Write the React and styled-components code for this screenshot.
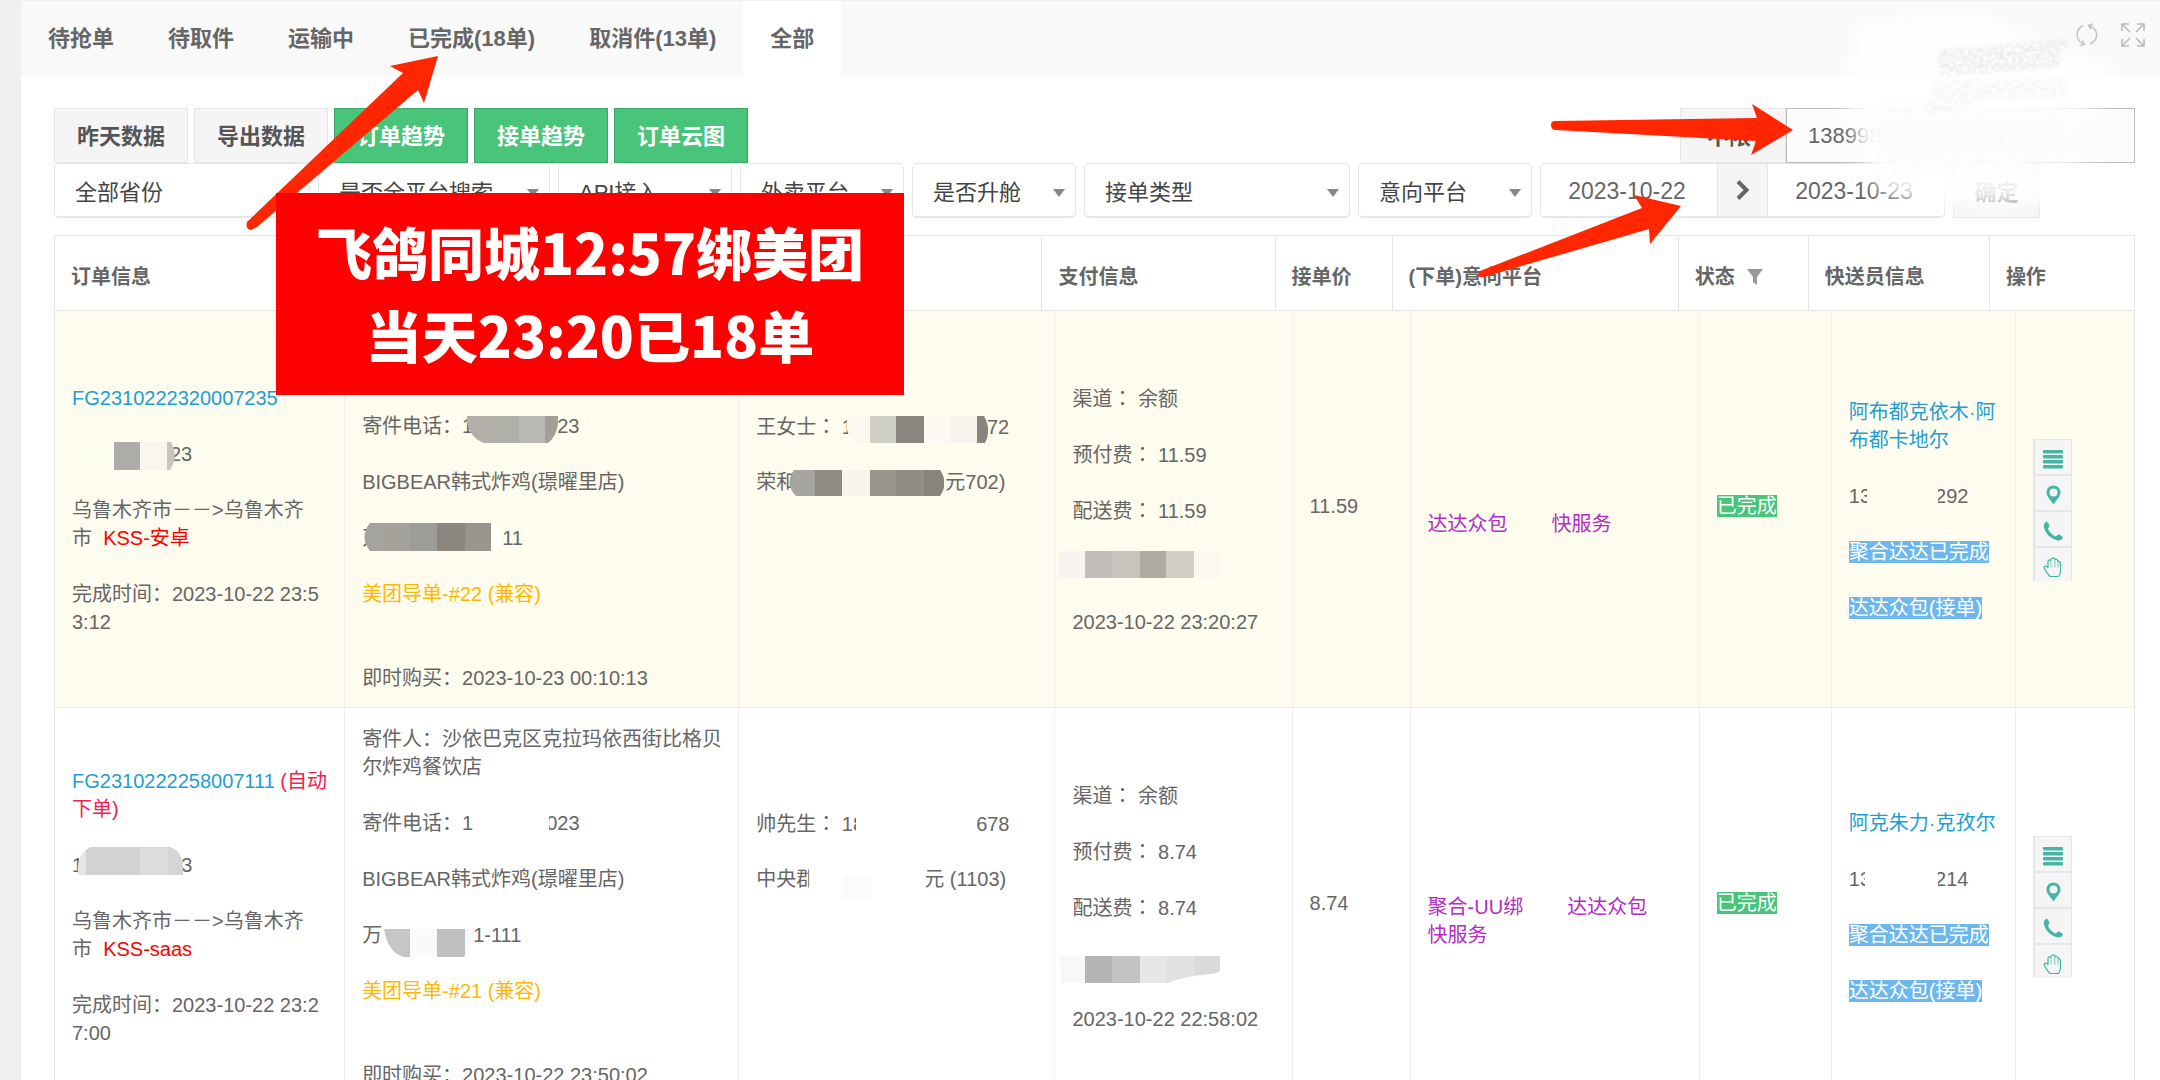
import React from "react";
import styled, { createGlobalStyle } from "styled-components";

const GlobalStyle = createGlobalStyle`
  * {
    box-sizing: border-box;
  }

  body {
    margin: 0;
    background: #f0f0f0;
    color: #666;
    font: 20px/28px "Liberation Sans", "Noto Sans CJK SC", sans-serif;
  }

  button,
  input,
  select {
    font-family: inherit;
    font-size: 22px;
    margin: 0;
  }
`;

const Page = styled.div`
  position: relative;
  height: 100vh;
  overflow: hidden;
  padding: 1px 0 0 21px;
`;

const Card = styled.main`
  min-height: 100%;
  background: #fff;
`;

const TabBar = styled.nav`
  display: flex;
  height: 75px;
  background: #f9f9f9;
`;

const Tab = styled.button`
  padding: 0 27px 5px;
  border: 0;
  background: ${(p) => (p.$active ? "#fff" : "transparent")};
  color: #666;
  font-weight: 700;
`;

const Tools = styled.div`
  display: flex;
  align-items: flex-start;
  gap: 23px;
  margin-left: auto;
  padding: 22px 15px 0 0;
`;

const ToolButton = styled.button`
  display: flex;
  padding: 0;
  border: 0;
  background: none;
`;

const Body = styled.div`
  padding: 32px 25px 0 33px;
`;

const Toolbar = styled.div`
  display: flex;
  gap: 6px;
`;

const Button = styled.button`
  height: 55px;
  padding: 0 22px 4px;
  border: 1px solid ${(p) => (p.$green ? "#3ba869" : "#e6e6e6")};
  background: ${(p) => (p.$green ? "#48c47b" : "#f5f5f5")};
  color: ${(p) => (p.$green ? "#fff" : "#555")};
  font-weight: 700;
`;

const Search = styled.div`
  display: flex;
  margin-left: auto;
`;

const SearchType = styled(Button)`
  width: 106px;
  padding: 0 30px 4px 22px;
`;

const SearchInput = styled.input`
  width: 349px;
  height: 55px;
  padding: 0 21px;
  border: 1px solid #bbb;
  background: #fcfcfc;
  color: #666;
`;

const Filters = styled.div`
  display: flex;
  gap: 8px;
`;

const SelectBox = styled.div`
  position: relative;
  width: ${(p) => p.$w}px;

  &::after {
    content: "";
    position: absolute;
    right: 11px;
    top: 26px;
    border: 6px solid transparent;
    border-top: 8px solid #888;
    border-bottom: 0;
    pointer-events: none;
  }
`;

const Select = styled.select`
  appearance: none;
  width: 100%;
  height: 55px;
  padding: 4px 20px 0 20px;
  border: 1px solid #e6e6e6;
  border-bottom-width: 2px;
  border-radius: 5px;
  background: #fff;
  color: #444;
`;

const DateRange = styled.div`
  display: flex;
  height: 55px;
  border: 1px solid #e6e6e6;
  border-bottom-width: 2px;
  border-radius: 5px;
  overflow: hidden;
`;

const DateInput = styled.input`
  width: 176px;
  padding: 2px 4px 0 0;
  border: 0;
  background: #fff;
  color: #666;
  font-size: 23px;
  text-align: center;
`;

const DateArrow = styled.span`
  display: flex;
  align-items: center;
  justify-content: center;
  width: 51px;
  border: solid #e6e6e6;
  border-width: 0 1px;
  background: #f5f5f5;
`;

const Confirm = styled(Button)`
  width: 87px;
  padding: 0 20px 2px;
  color: #666;
`;

const TableBox = styled.div`
  margin-top: 17px;
  border: 1px solid #e6e6e6;
  border-bottom: 0;
`;

const Table = styled.table`
  width: 100%;
  table-layout: fixed;
  border-collapse: separate;
  border-spacing: 0;
`;

const Col = styled.col`
  width: ${(p) => p.$w}px;
`;

const Th = styled.th`
  height: 75px;
  padding: 8px 0 0 16px;
  border: solid #e6e6e6;
  border-width: 0 1px 1px 0;
  text-align: left;
  white-space: nowrap;

  &:last-child {
    border-right: 0;
  }

  svg {
    margin-left: 12px;
    vertical-align: -1px;
  }
`;

const Row = styled.tr`
  background: ${(p) => (p.$hot ? "#fefcee" : "#fff")};
`;

const Td = styled.td`
  padding: 17px 0 15px 17px;
  border: solid #eee;
  border-width: 0 1px 1px 0;
  vertical-align: middle;
  white-space: nowrap;

  &:last-child {
    border-right: 0;
  }
`;

const Line = styled.div`
  height: 28px;
`;

const Raised = styled.div`
  padding-bottom: 8px;
`;

const Text = styled.span`
  color: ${(p) => p.$c};
`;

const Link = styled.a`
  color: #1e9fd0;
  text-decoration: none;
`;

const Tag = styled.span`
  background: ${(p) => p.$bg};
  color: #fff;
`;

const Gap = styled.span`
  display: inline-block;
  width: ${(p) => p.$w}px;
`;

// centred form of the full-width colon
const Wide = styled.span`
  font-family: "Noto Sans CJK TC", sans-serif;
`;

const Actions = styled.div`
  display: flex;
  flex-direction: column;
  width: 39px;
  height: 142px;
  overflow: hidden;
`;

const Action = styled.button`
  display: flex;
  flex: none;
  align-items: center;
  justify-content: center;
  height: 36px;
  padding: 3px 0 0;
  border: solid #e6e6e6;
  border-width: 1px 1px 1px 2px;
  background: #f5f5f5;
`;

const Marks = styled.svg`
  position: absolute;
  top: 0;
  left: 0;
  pointer-events: none;
`;

const Banner = styled.div`
  position: absolute;
  top: 193px;
  left: 276px;
  width: 628px;
  padding: 16px 0 20px;
  background: #f00;
  color: #fff;
  font: 900 56px/83px "Noto Sans CJK SC", sans-serif;
  text-align: center;
`;

const TABS = ["待抢单", "待取件", "运输中", "已完成(18单)", "取消件(13单)", "全部"];

const SELECTS = [
  ["全部省份", 256],
  ["是否全平台搜索", 232],
  ["API接入", 174],
  ["外卖平台", 164],
  ["是否升舱", 164],
  ["接单类型", 266],
  ["意向平台", 174],
];

const HEADS = [
  ["订单信息", 290],
  ["", 390],
  ["", 307],
  ["支付信息", 233],
  ["接单价", 117],
  ["(下单)意向平台", 286],
  ["状态", 130],
  ["快送员信息", 181],
  ["操作", 144],
];

const COLS = [290, 394, 316, 237, 118, 289, 132, 184, 118];

const BLUE = "#6db7ec";

const ORDERS = [
  {
    hot: true,
    order: [
      <Link href="#order">FG2310222320007235</Link>,
      null,
      <><Gap $w={98} />23</>,
      null,
      "乌鲁木齐市－－>乌鲁木齐",
      <>市&nbsp; <Text $c="#f00">KSS-安卓</Text></>,
      null,
      "完成时间：2023-10-22 23:5",
      "3:12",
    ],
    sender: [
      null, null, null,
      <>寄件电话：1<Gap $w={84} />23</>,
      null,
      "BIGBEAR韩式炸鸡(璟曜里店)",
      null,
      <>万<Gap $w={120} />11</>,
      null,
      <Text $c="#ffb800">美团导单-#22 (兼容)</Text>,
      null, null,
      "即时购买：2023-10-23 00:10:13",
    ],
    receiver: [
      <>王女士<Wide>：</Wide> 1<Gap $w={134} />72</>,
      null,
      <>荣和<Gap $w={149} />元702)</>,
      null, null, null, null,
    ],
    fee: "11.59",
    paid: "2023-10-22 23:20:27",
    platform: [null, <Text $c="#b32dc4">达达众包<Gap $w={44} />快服务</Text>],
    courier: [
      <Link href="#courier">阿布都克依木·阿</Link>,
      <Link href="#courier">布都卡地尔</Link>,
      null,
      <>13<Gap $w={64} />292</>,
    ],
  },
  {
    order: [
      <><Link href="#order">FG2310222258007111</Link> <Text $c="#f5224f">(自动</Text></>,
      <Text $c="#f5224f">下单)</Text>,
      null,
      <>1<Gap $w={98} />3</>,
      null,
      "乌鲁木齐市－－>乌鲁木齐",
      <>市&nbsp; <Text $c="#f00">KSS-saas</Text></>,
      null,
      "完成时间：2023-10-22 23:2",
      "7:00",
    ],
    sender: [
      "寄件人：沙依巴克区克拉玛依西街比格贝",
      "尔炸鸡餐饮店",
      null,
      <>寄件电话：1<Gap $w={73} />023</>,
      null,
      "BIGBEAR韩式炸鸡(璟曜里店)",
      null,
      <>万<Gap $w={91} />1-111</>,
      null,
      <Text $c="#ffb800">美团导单-#21 (兼容)</Text>,
      null, null,
      "即时购买：2023-10-22 23:50:02",
    ],
    receiver: [
      <>帅先生<Wide>：</Wide> 18<Gap $w={112} />678</>,
      null,
      <>中央郡<Gap $w={108} />元 (1103)</>,
      null, null, null, null,
    ],
    fee: "8.74",
    paid: "2023-10-22 22:58:02",
    platform: [
      null,
      <Text $c="#b32dc4">聚合-UU绑<Gap $w={44} />达达众包</Text>,
      <Text $c="#b32dc4">快服务</Text>,
    ],
    courier: [
      <Link href="#courier">阿克朱力·克孜尔</Link>,
      null,
      <>13<Gap $w={64} />214</>,
    ],
  },
];

// pixelated strips: y, height, [x edges], [fills], clip outline
const MOSAICS = [
  { y: 442, h: 28, x: [76, 114, 140, 167, 175], c: ["#fdfdf0", "#adaca8", "#f9f6ef", "#c9c5bb"], d: "M76 442H171Q179 456 170 470H76Z" },
  { y: 416, h: 27, x: [467, 490, 519, 545, 558], c: ["#b3b0a9", "#b0b0a8", "#b8b8b4", "#a29e98"], d: "M467 416H558V424Q556 437 548 443H484Q470 438 467 422Z" },
  { y: 523, h: 28, x: [364, 384, 410, 437, 465, 491, 502], c: ["#a5a39e", "#a5a29c", "#9c9c98", "#8b877f", "#98958d", "#fefefb"], d: "M370 523H496Q502 526 502 537Q502 548 494 551H370Q359 537 370 523Z" },
  { y: 416, h: 27, x: [847, 870, 896, 924, 950, 977, 988], c: ["#fbf8f2", "#d0d0c5", "#8b8780", "#fdfaf3", "#f7f4ee", "#8a847d"], d: "M847 416H984Q992 430 985 443H856Q849 438 847 430Z" },
  { y: 470, h: 26, x: [789, 815, 842, 870, 896, 924, 944], c: ["#a6a49e", "#8f8b84", "#f7f4ea", "#98958d", "#918d86", "#87847a"], d: "M794 470H940Q949 483 940 496H796Q784 484 794 470Z" },
  { y: 551, h: 27, x: [1059, 1085, 1112, 1140, 1166, 1194, 1220], c: ["#f8f5f0", "#c1bdb8", "#c8c3bd", "#aeaba2", "#d1cec5", "#fbf8f2"], d: "M1059 551H1220V578H1059Z" },
  { y: 847, h: 28, x: [77, 86, 140, 168, 183], c: ["#e6e6e6", "#d3d3d3", "#dcdcdc", "#d5d5d5"], d: "M78 875Q76 855 90 847H170Q182 851 183 866V875Z" },
  { y: 929, h: 28, x: [384, 410, 437, 465, 475], c: ["#c6c6c6", "#fafafa", "#c0c0c0", "#f8f8f8"], d: "M384 929H475Q472 945 464 957H404Q388 953 384 929Z" },
  { y: 956, h: 27, x: [1059, 1085, 1112, 1140, 1166, 1194, 1220], c: ["#f8f8f8", "#b5b5b5", "#c3c3c3", "#e7e7e7", "#e2e2e2", "#dadada"], d: "M1059 956H1220V970Q1218 974 1210 974Q1186 976 1168 983H1062Z" },
];

function Lines({ items }) {
  return items.map((item, i) => <Line key={i}>{item}</Line>);
}

function RefreshIcon() {
  return (
    <svg width="22" height="24" viewBox="0 0 22 24" fill="none" stroke="#c4c4c4" strokeWidth="1.5">
      <path d="M7 2.5C-1 7-1 17 8 21.5M4 22.5L8.500 21.500 6.500 17.500M14 21C23 17 23 6 13 2.500M17 1L12.500 2.500 15 6.500" />
    </svg>
  );
}

function FullscreenIcon() {
  return (
    <svg width="24" height="24" viewBox="0 0 24 24" fill="none" stroke="#bbb" strokeWidth="1.6">
      <path d="M1 8V1H8M1 1L9 9M16 1H23V8M23 1L15 9M1 16V23H8M1 23L9 15M16 23H23V16M23 23L15 15" />
    </svg>
  );
}

function ListIcon() {
  return (
    <svg width="20" height="20" viewBox="0 0 20 20" fill="#45b5a6">
      <rect y="1" width="20" height="3.500" rx="1" />
      <rect y="6" width="20" height="3.500" rx="1" />
      <rect y="11" width="20" height="3.500" rx="1" />
      <rect y="16" width="20" height="3.500" rx="1" />
    </svg>
  );
}

function PinIcon() {
  return (
    <svg width="20" height="20" viewBox="0 0 20 20" fill="#45b5a6">
      <path fillRule="evenodd" d="M10.500 0.500C14.500 0.500 17.500 3.500 17.500 7.500C17.500 11.500 13.500 15 10.500 19.500C7.500 15 3.500 11.500 3.500 7.500C3.500 3.500 6.500 0.500 10.500 0.500ZM10.500 3.500A4 4 0 1 0 10.500 11.500A4 4 0 1 0 10.500 3.500Z" />
    </svg>
  );
}

function PhoneIcon() {
  return (
    <svg width="20" height="20" viewBox="0 0 20 20" fill="#45b5a6">
      <path d="M3.500 0.500C5 1.500 6 3 6.500 5C6 6.500 5 7 5 8C6.500 11.500 9.500 14 12.500 15.500C13.500 15.500 14 14 15.500 13.500C17.500 14 19 15 20 16.500C19 18.500 17 20 14.500 19.500C7.500 17.500 2 12.500 0.800 5.500C0.500 3.500 1.500 1.500 3.500 0.500Z" />
    </svg>
  );
}

function HandIcon() {
  return (
    <svg width="20" height="20" viewBox="0 0 20 20" fill="none" stroke="#45b5a6" strokeWidth="1.2" strokeLinejoin="round" strokeLinecap="round">
      <path d="M7 19.500C4.500 17 2.500 14 1 10.500C1.500 8.500 3.500 9 5 10.500V4Q6.500 2 7.500 3.500Q8 1 9.500 1Q11.500 0.500 12 2.500Q14.500 1.500 15 4.500Q17.500 4 17.500 7V14.500Q17 17.500 15.500 19.500Z" />
      <path d="M8 4V10M11.800 3V10M15 5V10" strokeWidth="0.7" />
    </svg>
  );
}

const ACTIONS = [
  ["详情", ListIcon],
  ["位置", PinIcon],
  ["电话", PhoneIcon],
  ["操作", HandIcon],
];

function OrderRow({ data }) {
  return (
    <Row $hot={data.hot}>
      <Td><Lines items={data.order} /></Td>
      <Td><Lines items={data.sender} /></Td>
      <Td><Lines items={data.receiver} /></Td>
      <Td>
        <Lines
          items={[
            <>渠道<Wide>：</Wide> 余额</>,
            null,
            <>预付费<Wide>：</Wide> {data.fee}</>,
            null,
            <>配送费<Wide>：</Wide> {data.fee}</>,
            null,
            null,
            null,
            data.paid,
          ]}
        />
      </Td>
      <Td><Raised>{data.fee}</Raised></Td>
      <Td><Lines items={data.platform} /></Td>
      <Td><Raised><Tag $bg="#48c47b">已完成</Tag></Raised></Td>
      <Td>
        <Lines
          items={[
            ...data.courier,
            null,
            <Tag $bg={BLUE}>聚合达达已完成</Tag>,
            null,
            <Tag $bg={BLUE}>达达众包(接单)</Tag>,
          ]}
        />
      </Td>
      <Td>
        <Actions>
          {ACTIONS.map(([label, Icon]) => (
            <Action key={label} aria-label={label}><Icon /></Action>
          ))}
        </Actions>
      </Td>
    </Row>
  );
}

function Annotations() {
  return (
    <Marks width="2160" height="1080" viewBox="0 0 2160 1080" aria-hidden="true">
      <defs>
        <filter id="soft" x="-20%" y="-20%" width="140%" height="140%">
          <feGaussianBlur stdDeviation="9" />
        </filter>
        <filter id="grain" x="-5%" y="-10%" width="110%" height="120%">
          <feTurbulence type="fractalNoise" baseFrequency="0.25" numOctaves="3" seed="4" result="n" />
          <feColorMatrix in="n" type="matrix" values="0 0 0 0 0.72  0 0 0 0 0.72  0 0 0 0 0.72  2 0 0 0 -0.5" result="g" />
          <feGaussianBlur in="SourceGraphic" stdDeviation="2" result="s" />
          <feComposite in="g" in2="s" operator="in" />
        </filter>
      </defs>

      {/* eraser haze and chalk smudges */}
      <path d="M1860 22L1980 14 2060 50 2120 70 2100 102 2030 116 2030 168 2110 172 2070 200 1990 208 1900 198 1872 184 1864 120 1845 80Z" fill="#fff" opacity="0.9" filter="url(#soft)" />
      <path d="M1848 100H2090V120H1848Z M1900 154H2080V172H1900Z" fill="#fefefe" opacity="0.85" filter="url(#soft)" />
      <path d="M1858 114H2040V160H1858Z" fill="#fdfdfd" opacity="0.85" filter="url(#soft)" />
      <path d="M1937 50L2068 39 2070 44 2060 50 2060 68 1940 76Z" fill="#000" opacity="0.55" filter="url(#grain)" />
      <path d="M1932 80L2066 77 2066 98 1990 100 1926 113Z" fill="#000" opacity="0.28" filter="url(#grain)" />
      <path d="M1885 100L2060 108 2064 160 2020 172 1880 178 1876 150Z" fill="#000" opacity="0.1" filter="url(#grain)" />

      {/* wiped digits */}
      <rect x="1867" y="484" width="71" height="24" fill="#fefcee" />
      <rect x="1865" y="866" width="73" height="24" fill="#fff" />
      <rect x="476" y="811" width="73" height="24" fill="#fff" />
      <rect x="856" y="811" width="116" height="24" fill="#fff" />
      <rect x="809" y="868" width="117" height="26" fill="#fff" />
      <rect x="843" y="875" width="28" height="24" fill="#fbfbfb" />

      {MOSAICS.map((m, i) => (
        <g key={i} clipPath={`url(#mosaic${i})`}>
          <clipPath id={`mosaic${i}`}>
            <path d={m.d} />
          </clipPath>
          {m.c.map((c, k) => (
            <rect key={k} x={m.x[k]} y={m.y} width={m.x[k + 1] - m.x[k]} height={m.h} fill={c} />
          ))}
        </g>
      ))}

      <g fill="#ff2600">
        <path d="M438 56L390 66 403 73 247 222Q245 229 251 230L257 227 418 90 424 103Z" />
        <path d="M1793 130L1752 104 1757 118 1555 121Q1551 121 1551 125Q1551 130 1556 130L1756 141 1751 155Z" />
        <path d="M1681 206L1634 195 1642 208 1480 271Q1477 274 1479 277L1484 277 1649 229 1650 244Z" />
      </g>
    </Marks>
  );
}

export default function App() {
  return (
    <Page>
      <GlobalStyle />
      <Card>
        <TabBar>
          {TABS.map((tab) => (
            <Tab key={tab} $active={tab === "全部"}>{tab}</Tab>
          ))}
          <Tools>
            <ToolButton aria-label="刷新"><RefreshIcon /></ToolButton>
            <ToolButton aria-label="全屏"><FullscreenIcon /></ToolButton>
          </Tools>
        </TabBar>
        <Body>
          <Toolbar>
            <Button>昨天数据</Button>
            <Button>导出数据</Button>
            <Button $green>订单趋势</Button>
            <Button $green>接单趋势</Button>
            <Button $green>订单云图</Button>
            <Search>
              <SearchType>不限</SearchType>
              <SearchInput aria-label="手机号" defaultValue="1389989" />
            </Search>
          </Toolbar>
          <Filters>
            {SELECTS.map(([name, w]) => (
              <SelectBox key={name} $w={w}>
                <Select aria-label={name}>
                  <option>{name}</option>
                </Select>
              </SelectBox>
            ))}
            <DateRange>
              <DateInput aria-label="开始日期" defaultValue="2023-10-22" />
              <DateArrow>
                <svg width="14" height="20" viewBox="0 0 14 20" fill="none" stroke="#666" strokeWidth="4">
                  <path d="M2 1.500L10.500 10 2 18.500" />
                </svg>
              </DateArrow>
              <DateInput aria-label="结束日期" defaultValue="2023-10-23" />
            </DateRange>
            <Confirm>确定</Confirm>
          </Filters>
          <TableBox>
            <Table>
              <colgroup>
                {HEADS.map(([, w], i) => <Col key={i} $w={w} />)}
              </colgroup>
              <thead>
                <tr>
                  {HEADS.map(([name], i) => (
                    <Th key={i}>
                      {name}
                      {name === "状态" && (
                        <svg width="16" height="16" viewBox="0 0 16 16" fill="#999">
                          <path d="M0 0H16L10 8V16L6 13V8Z" />
                        </svg>
                      )}
                    </Th>
                  ))}
                </tr>
              </thead>
            </Table>
            <Table>
              <colgroup>
                {COLS.map((w, i) => <Col key={i} $w={w} />)}
              </colgroup>
              <tbody>
                {ORDERS.map((o) => <OrderRow key={o.paid} data={o} />)}
              </tbody>
            </Table>
          </TableBox>
        </Body>
      </Card>
      <Annotations />
      <Banner>
        飞鸽同城12:57绑美团
        <br />
        当天23:20已18单
      </Banner>
    </Page>
  );
}
